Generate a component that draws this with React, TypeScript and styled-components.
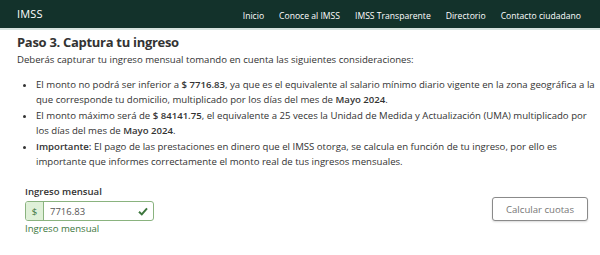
import React from "react"
import styled, { createGlobalStyle } from "styled-components"

const Global = createGlobalStyle`
  body {
    margin: 0;
    background: #fff;
    font-family: 'Open Sans', 'Liberation Sans', sans-serif;
    color: #333;
  }
`

const Navbar = styled.header`
  height: 28px;
  background: #13322b;
  border-bottom: 2px solid #d6e3df;
  display: flex;
  align-items: center;
  justify-content: space-between;
  padding: 0 19px 0 17px;
`

const Brand = styled.div`
  color: #fff;
  font-size: 11px;
  letter-spacing: 0.2px;
  padding-bottom: 2px;
`

const NavLinks = styled.nav`
  display: flex;
  gap: 15px;
  padding-top: 3px;
`

const NavLink = styled.a`
  color: #fff;
  font-size: 8.6px;
  text-decoration: none;
`

const Main = styled.main`
  padding: 2px 0 0 17px;
`

const Title = styled.h1`
  margin: 0 0 1px;
  font-size: 13px;
  font-weight: 700;
  letter-spacing: -0.3px;
  color: #333;
  line-height: 20px;
`

const Intro = styled.p`
  margin: 0 0 10px;
  font-size: 9.6px;
  line-height: 14px;
`

const Bullets = styled.ul`
  margin: 0;
  padding-left: 19px;
  font-size: 9.6px;
  line-height: 15.4px;
  white-space: nowrap;

  b {
    font-weight: 600;
  }
`

const Bullet = styled.li`
  list-style: disc;
`

const Form = styled.div`
  margin-top: 17px;
  display: flex;
  justify-content: space-between;
  align-items: flex-start;
  padding: 0 12px 0 8px;
`

const Field = styled.div`
  display: flex;
  flex-direction: column;
`

const Label = styled.label`
  font-size: 9.6px;
  font-weight: 600;
  line-height: 12px;
  margin-bottom: 3px;
`

const InputGroup = styled.div`
  display: flex;
  width: 129px;
  height: 20px;
  border: 1px solid #8ab37f;
  border-radius: 3px;
  overflow: hidden;
  box-sizing: border-box;
`

const Addon = styled.span`
  width: 17px;
  background: #dff0d8;
  border-right: 1px solid #8ab37f;
  color: #3c763d;
  font-size: 9.5px;
  display: flex;
  align-items: center;
  justify-content: center;
`

const Input = styled.input`
  flex: 1;
  border: none;
  outline: none;
  font-family: inherit;
  font-size: 9.5px;
  color: #555;
  padding: 0 6px;
  min-width: 0;
`

const Check = styled.span`
  display: flex;
  align-items: center;
  padding-right: 5px;
`

const Help = styled.div`
  margin-top: 2px;
  color: #3c763d;
  font-size: 9.6px;
  line-height: 12px;
`

const Button = styled.button`
  margin-top: 11px;
  width: 96px;
  height: 24px;
  background: #fff;
  border: 1px solid #8a8a8a;
  border-radius: 3px;
  color: #777;
  font-family: inherit;
  font-size: 9.6px;
  box-shadow: 0 1px 2px rgba(0, 0, 0, 0.15);
`

const App = () => (
  <>
    <Global />
    <Navbar>
      <Brand>IMSS</Brand>
      <NavLinks>
        <NavLink>Inicio</NavLink>
        <NavLink>Conoce al IMSS</NavLink>
        <NavLink>IMSS Transparente</NavLink>
        <NavLink>Directorio</NavLink>
        <NavLink>Contacto ciudadano</NavLink>
      </NavLinks>
    </Navbar>
    <Main>
      <Title>Paso 3. Captura tu ingreso</Title>
      <Intro>Deberás capturar tu ingreso mensual tomando en cuenta las siguientes consideraciones:</Intro>
      <Bullets>
        <Bullet>
          El monto no podrá ser inferior a <b>$ 7716.83</b>, ya que es el equivalente al salario mínimo diario
          vigente en la zona geográfica a la
          <br />
          que corresponde tu domicilio, multiplicado por los días del mes de <b>Mayo 2024</b>.
        </Bullet>
        <Bullet>
          El monto máximo será de <b>$ 84141.75</b>, el equivalente a 25 veces la Unidad de Medida y Actualización
          (UMA) multiplicado por
          <br />
          los días del mes de <b>Mayo 2024</b>.
        </Bullet>
        <Bullet>
          <b>Importante:</b> El pago de las prestaciones en dinero que el IMSS otorga, se calcula en función de tu
          ingreso, por ello es
          <br />
          importante que informes correctamente el monto real de tus ingresos mensuales.
        </Bullet>
      </Bullets>
      <Form>
        <Field>
          <Label>Ingreso mensual</Label>
          <InputGroup>
            <Addon>$</Addon>
            <Input defaultValue="7716.83" />
            <Check>
              <svg width="10" height="9" viewBox="0 0 10 9">
                <path d="M1 4.8 L3.8 7.4 L9 1.4" fill="none" stroke="#3c763d" strokeWidth="2" />
              </svg>
            </Check>
          </InputGroup>
          <Help>Ingreso mensual</Help>
        </Field>
        <Button>Calcular cuotas</Button>
      </Form>
    </Main>
  </>
)

export default App
